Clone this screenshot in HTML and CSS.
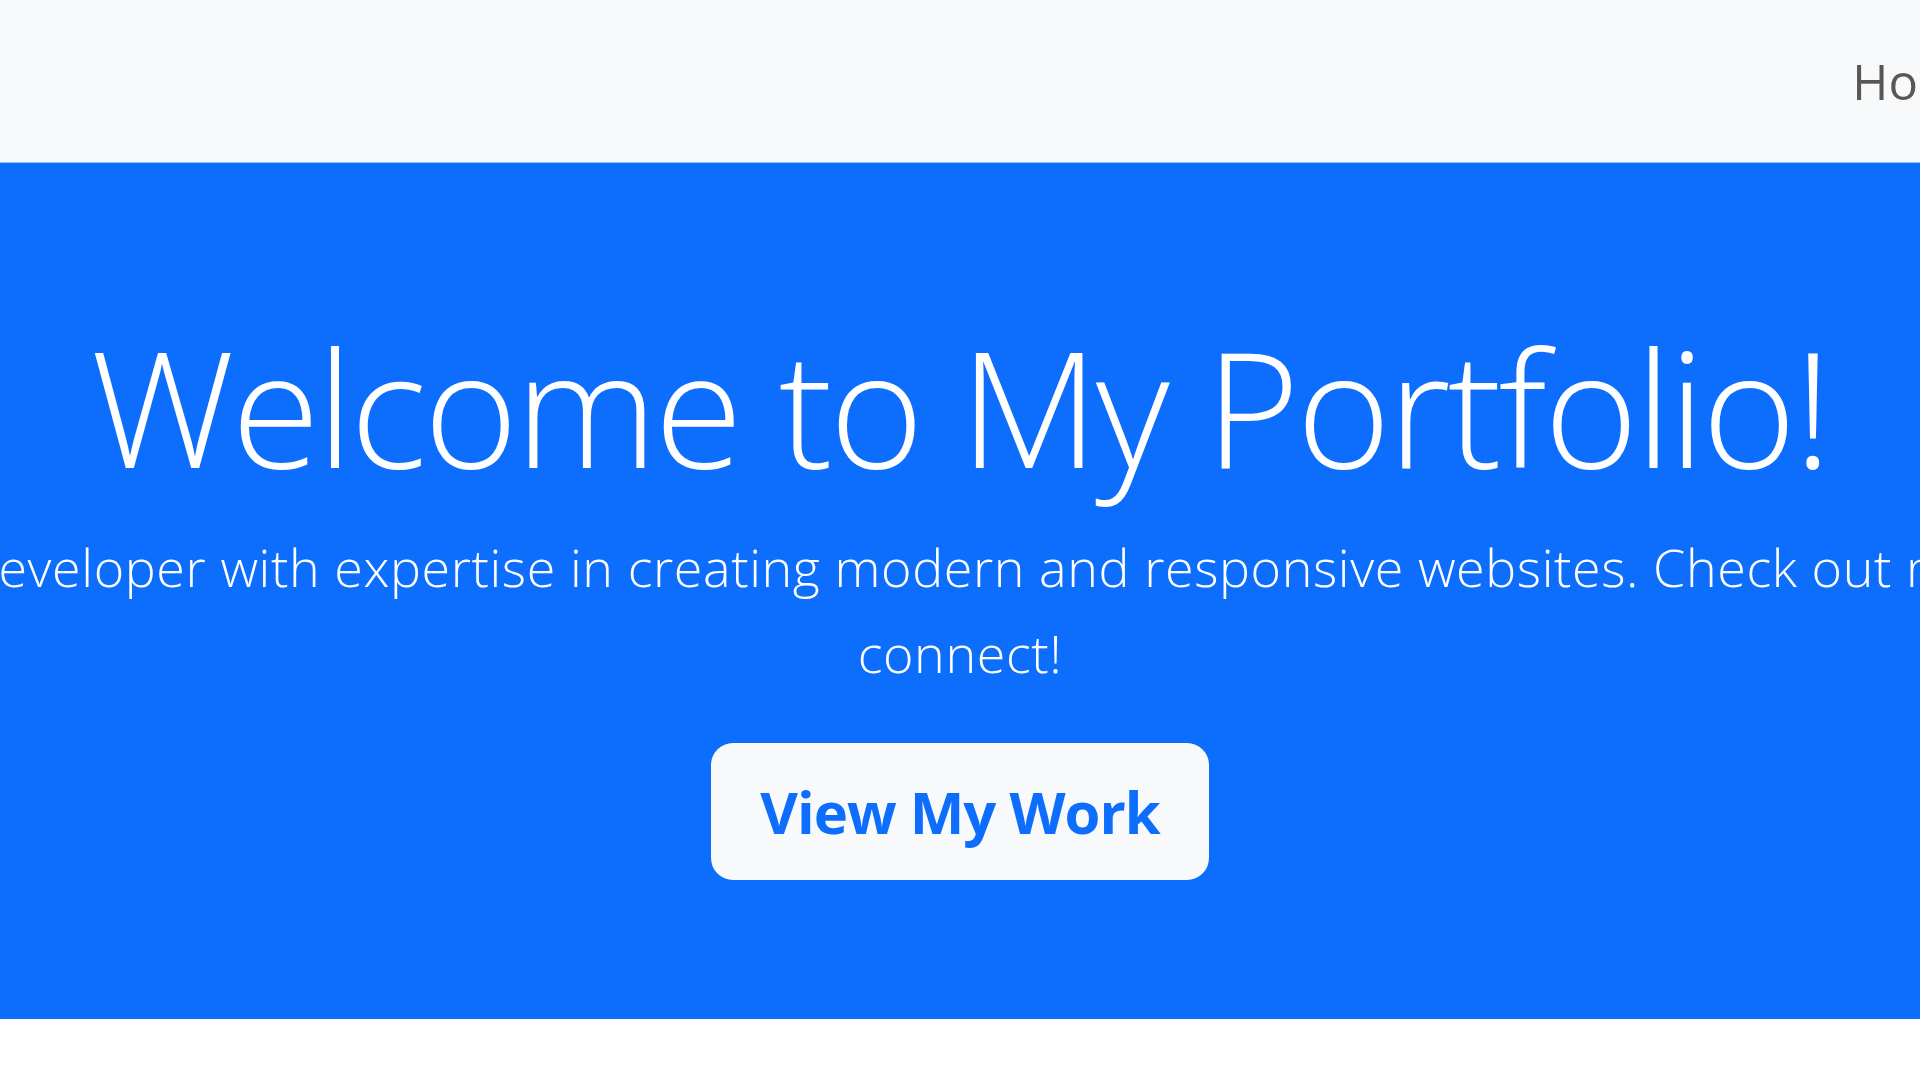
FILE: index.html
```html
<!DOCTYPE html>
<html lang="en">
<head>
<meta charset="utf-8">
<title>My Portfolio</title>
<link rel="stylesheet" href="styles.css">
</head>
<body>
<header class="navbar">
  <div class="nav-container">
    <a class="brand" href="#">My Portfolio</a>
    <ul class="nav-links">
      <li><a class="nav-link" href="#">Home</a></li>
      <li><a class="nav-link" href="#">About</a></li>
      <li><a class="nav-link" href="#">Skills</a></li>
      <li><a class="nav-link" href="#">Projects</a></li>
      <li><a class="nav-link" href="#">Contact</a></li>
    </ul>
  </div>
</header>
<section class="hero">
  <h1 class="hero-title">Welcome to My Portfolio!</h1>
  <p class="lead">
    <span class="lead-line">Hi, I'm a passionate web developer with expertise in creating modern and responsive websites. Check out my latest projects and let's</span>
    <span class="lead-line">connect!</span>
  </p>
  <a class="btn-work" href="#">View My Work</a>
</section>
<main class="after"></main>
</body>
</html>
```
FILE: styles.css
```css
html, body {
  margin: 0;
  padding: 0;
  overflow: hidden;
  background: #ffffff;
  font-family: "Open Sans", "Noto Sans", sans-serif;
}

.navbar {
  height: 162px;
  background: #f8f9fa;
  border-bottom: 1px solid #93bff5;
  display: flex;
  justify-content: center;
  align-items: center;
}

.nav-container {
  flex: none;
  width: 3888px;
  padding-right: 87px;
  box-sizing: border-box;
  display: flex;
  align-items: center;
}

.brand {
  font-size: 60px;
  color: rgba(0, 0, 0, 0.9);
  text-decoration: none;
}

.nav-links {
  list-style: none;
  margin: 0 0 0 auto;
  padding: 0;
  display: flex;
}

.nav-link {
  display: block;
  padding: 0 24px;
  font-size: 49px;
  line-height: 72px;
  color: rgba(0, 0, 0, 0.65);
  text-decoration: none;
}

.hero {
  background: #0d6efd;
  color: #ffffff;
  padding: 146px 0 139px;
  display: flex;
  flex-direction: column;
  align-items: center;
}

.hero-title {
  margin: 0;
  font-size: 161px;
  font-weight: 300;
  line-height: 193px;
  letter-spacing: -3px;
  white-space: nowrap;
}

.lead {
  margin: 22px 0 47px;
  font-size: 52px;
  font-weight: 300;
  line-height: 86px;
  letter-spacing: 0.6px;
  text-align: center;
}

.lead-line {
  display: block;
  white-space: nowrap;
}

.btn-work {
  display: block;
  background: #f8f9fa;
  color: #0d6efd;
  font-size: 58px;
  font-weight: 700;
  line-height: 137px;
  letter-spacing: -1px;
  padding: 0 49px;
  border-radius: 22px;
  text-decoration: none;
  white-space: nowrap;
}

.after {
  height: 61px;
}
```
